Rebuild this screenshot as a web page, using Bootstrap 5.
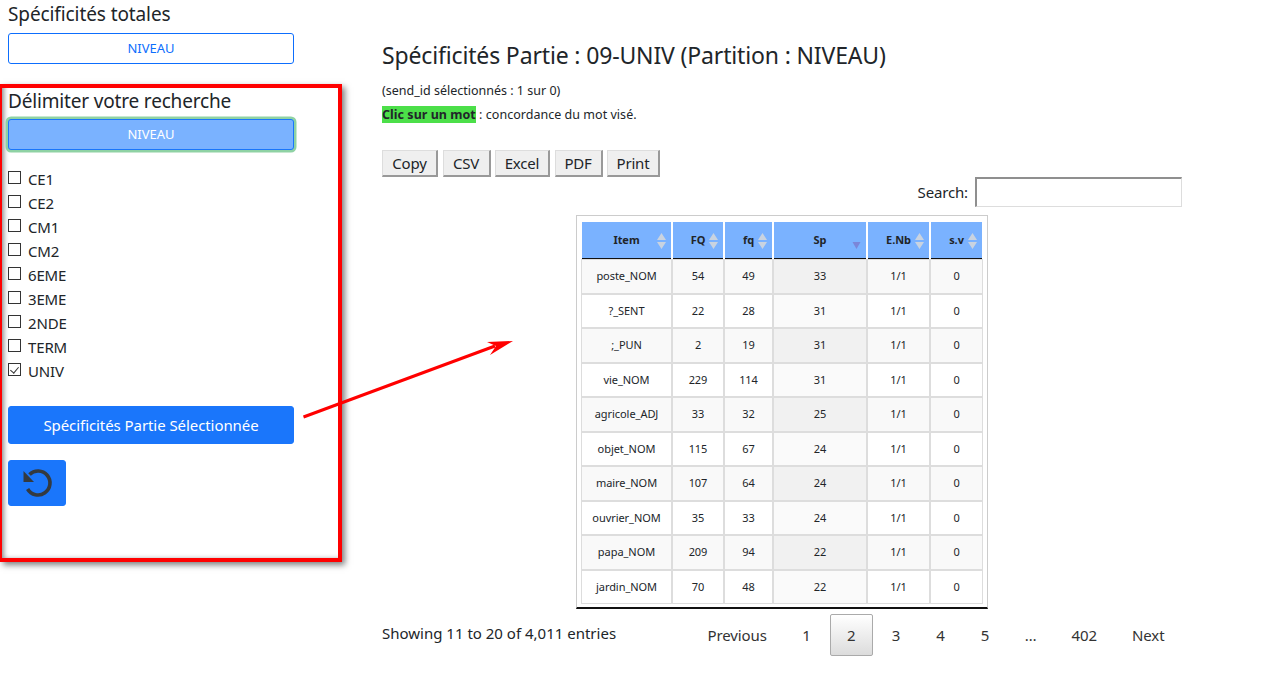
<!DOCTYPE html>
<html lang="fr"><head><meta charset="utf-8"><title>Spécificités</title>
<link href="https://cdn.jsdelivr.net/npm/bootstrap@5.3.0/dist/css/bootstrap.min.css" rel="stylesheet">
<style>
body{font-family:"Noto Sans","Open Sans",sans-serif;color:#212529;background:#fff;overflow:hidden;height:693px;position:relative;font-size:15px}
.page-wrap{width:1288px}
.side-col{width:342px;flex:none}
.side-head{font-size:19px;line-height:28px;margin:0;font-weight:400;letter-spacing:-.1px}
.side-top{padding:0 48px 0 8px;height:84px}
.nv-btn{display:block;width:100%;height:31px;font-size:13px;line-height:17px;padding:0;margin-top:5px;border-radius:3px}
.red-box{height:478px;width:342px;border:4px solid #f00;border-left-width:2px;padding:0 44px 0 6px;box-shadow:3px 3px 6px rgba(0,0,0,.5),inset 5px -2px 5px -3px rgba(0,0,0,.45)}
.red-box .side-head{margin-top:-1px;letter-spacing:-.17px}
.nv-on{background:#7ab2ff;border-color:#1a76fb;color:#fff;box-shadow:0 0 0 2.5px #8fd2a4;margin-top:4px}
.chk-list{margin-top:17px}
.chk-row{height:24px;display:flex;align-items:center;font-size:15px;letter-spacing:-.15px}
.chk-row input{appearance:none;width:13px;height:13px;border:1px solid #333;background:#fff;margin:0 7px 3px 0;flex:none;position:relative}
.chk-row input:checked::after{content:"";position:absolute;left:3px;top:1px;width:5px;height:8px;border:solid #333;border-width:0 1px 1px 0;transform:rotate(40deg)}
.go-btn{display:block;width:100%;height:38px;background:#1a76fb;border-color:#1a76fb;font-size:15px;line-height:36px;padding:0;margin-top:23px;letter-spacing:-.07px;border-radius:3px}
.undo-btn{width:58px;height:46px;background:#1a76fb;border-color:#1a76fb;padding:0;margin-top:16px;display:flex;align-items:center;justify-content:center;border-radius:3px}
.main-col{width:800px;margin-left:40px;flex:none}
.main-title{font-size:23px;line-height:30px;font-weight:400;margin:40px 0 0;letter-spacing:-.15px}
.note-a{font-size:12.5px;line-height:16px;margin:13px 0 0}
.note-b{font-size:12.5px;line-height:16px;margin:8px 0 0;letter-spacing:.03px}
.note-b b{background:#4cdf49;font-weight:700}
.tool-row{gap:4.5px;margin-top:27px}
.dt-btn{height:27px;border:1px solid #ccc;border-width:1px 2px 2px 1px;border-color:#ddd #999 #999 #ddd;background:#efefef;font-size:15px;line-height:24px;padding:0;color:#212529;letter-spacing:-.2px}
.dt-btn:nth-child(1){width:56px}
.dt-btn:nth-child(2){width:48px}
.dt-btn:nth-child(3){width:55px}
.dt-btn:nth-child(4){width:48px}
.dt-btn:nth-child(5){width:53px}
.search-row{height:30px;justify-content:flex-end;align-items:center;gap:7px;font-size:15px;letter-spacing:-.15px}
.search-row input{width:207px;height:30px;border:1px solid #999;border-top-width:2px;border-left-width:2px;border-color:#8f8f8f #ddd #ddd #8f8f8f}
.tbl-box{width:412px;height:394px;margin:8px 0 0 194px;border:1px solid #ccc;border-bottom:2px solid #111;padding:4px 5px}
.tbl-box table{border-collapse:separate;border-spacing:2px;table-layout:fixed;width:404px;margin:0 0 0 -2px;font-size:11px;letter-spacing:-.05px}
.tbl-box th{background:#7ab2ff;height:36px;text-align:center;font-weight:700;position:relative;border-bottom:0;padding:0;box-shadow:0 1px 0 #111}
.tbl-box td{height:32.5px;text-align:center;padding:0;outline:1px solid #ddd;background:#fff}
.tbl-box tbody tr:nth-child(odd) td{background:#f9f9f9}
.tbl-box td.sort-c{background:#fafafa}
.tbl-box tbody tr:nth-child(odd) td.sort-c{background:#f1f1f1}
.sort-ico{position:absolute;right:5px;top:11px;width:9px;height:16px}
.foot-row{margin-top:5px;align-items:center;height:42px;font-size:15px}
.foot-info{padding-bottom:3px}
.pg-wrap{margin-left:auto;gap:0;align-items:center;font-size:15px;letter-spacing:-.1px}
.pg-item{padding:0 17.5px;line-height:42px;height:42px;color:#333;min-width:44.5px;text-align:center}
.pg-on{border:1px solid #aaa;border-radius:2px;background:linear-gradient(#fff,#dcdcdc);line-height:40px;padding:0;min-width:43px;margin:0 1px}
.arrow-svg{position:absolute;left:300px;top:335px}
</style></head><body>
<div class="page-wrap d-flex">
<div class="side-col">
 <div class="side-top"><h5 class="side-head">Spécificités totales</h5><button class="btn btn-outline-primary nv-btn">NIVEAU</button></div>
 <div class="red-box">
  <h5 class="side-head">Délimiter votre recherche</h5>
  <button class="btn nv-btn nv-on">NIVEAU</button>
  <div class="chk-list">
   <label class="chk-row"><input type="checkbox">CE1</label>
   <label class="chk-row"><input type="checkbox">CE2</label>
   <label class="chk-row"><input type="checkbox">CM1</label>
   <label class="chk-row"><input type="checkbox">CM2</label>
   <label class="chk-row"><input type="checkbox">6EME</label>
   <label class="chk-row"><input type="checkbox">3EME</label>
   <label class="chk-row"><input type="checkbox">2NDE</label>
   <label class="chk-row"><input type="checkbox">TERM</label>
   <label class="chk-row"><input type="checkbox" checked>UNIV</label>
  </div>
  <button class="btn btn-primary go-btn">Spécificités Partie Sélectionnée</button>
  <button class="btn btn-primary undo-btn" aria-label="reset"><svg width="32" height="32" viewBox="0 0 32 32"><path d="M8.500 7.500A12 12 0 1 1 6.600 22" fill="none" stroke="#343a40" stroke-width="3.600"/><path d="M2.500 4V15H13z" fill="#343a40"/></svg></button>
 </div>
</div>
<div class="main-col">
 <h3 class="main-title">Spécificités Partie : 09-UNIV (Partition : NIVEAU)</h3>
 <p class="note-a">(send_id sélectionnés : 1 sur 0)</p>
 <p class="note-b"><b>Clic sur un mot</b> : concordance du mot visé.</p>
 <div class="d-flex tool-row"><button class="dt-btn">Copy</button><button class="dt-btn">CSV</button><button class="dt-btn">Excel</button><button class="dt-btn">PDF</button><button class="dt-btn">Print</button></div>
 <div class="d-flex search-row"><label>Search:</label><input type="search"></div>
 <div class="tbl-box">
 <table>
  <colgroup><col style="width:89px"><col style="width:50px"><col style="width:47px"><col style="width:92px"><col style="width:61px"><col style="width:51px"></colgroup>
  <thead><tr>
  <th>Item<svg class="sort-ico" viewBox="0 0 9 16"><path d="M4.500 0 9 7H0zM4.500 16 0 9h9z" fill="#c9d3e0"/></svg></th>
  <th>FQ<svg class="sort-ico" viewBox="0 0 9 16"><path d="M4.500 0 9 7H0zM4.500 16 0 9h9z" fill="#c9d3e0"/></svg></th>
  <th>fq<svg class="sort-ico" viewBox="0 0 9 16"><path d="M4.500 0 9 7H0zM4.500 16 0 9h9z" fill="#c9d3e0"/></svg></th>
  <th>Sp<svg class="sort-ico" viewBox="0 0 9 16"><path d="M.5 9h8L4.500 16z" fill="#7b86d8"/></svg></th>
  <th>E.Nb<svg class="sort-ico" viewBox="0 0 9 16"><path d="M4.500 0 9 7H0zM4.500 16 0 9h9z" fill="#c9d3e0"/></svg></th>
  <th>s.v<svg class="sort-ico" viewBox="0 0 9 16"><path d="M4.500 0 9 7H0zM4.500 16 0 9h9z" fill="#c9d3e0"/></svg></th>
  </tr></thead>
  <tbody>
  <tr><td>poste_NOM</td><td>54</td><td>49</td><td class="sort-c">33</td><td>1/1</td><td>0</td></tr>
  <tr><td>?_SENT</td><td>22</td><td>28</td><td class="sort-c">31</td><td>1/1</td><td>0</td></tr>
  <tr><td>;_PUN</td><td>2</td><td>19</td><td class="sort-c">31</td><td>1/1</td><td>0</td></tr>
  <tr><td>vie_NOM</td><td>229</td><td>114</td><td class="sort-c">31</td><td>1/1</td><td>0</td></tr>
  <tr><td>agricole_ADJ</td><td>33</td><td>32</td><td class="sort-c">25</td><td>1/1</td><td>0</td></tr>
  <tr><td>objet_NOM</td><td>115</td><td>67</td><td class="sort-c">24</td><td>1/1</td><td>0</td></tr>
  <tr><td>maire_NOM</td><td>107</td><td>64</td><td class="sort-c">24</td><td>1/1</td><td>0</td></tr>
  <tr><td>ouvrier_NOM</td><td>35</td><td>33</td><td class="sort-c">24</td><td>1/1</td><td>0</td></tr>
  <tr><td>papa_NOM</td><td>209</td><td>94</td><td class="sort-c">22</td><td>1/1</td><td>0</td></tr>
  <tr><td>jardin_NOM</td><td>70</td><td>48</td><td class="sort-c">22</td><td>1/1</td><td>0</td></tr>
  </tbody>
 </table>
 </div>
 <div class="d-flex foot-row"><div class="foot-info">Showing 11 to 20 of 4,011 entries</div>
 <div class="d-flex pg-wrap"><span class="pg-item">Previous</span><span class="pg-item">1</span><span class="pg-item pg-on">2</span><span class="pg-item">3</span><span class="pg-item">4</span><span class="pg-item">5</span><span class="pg-item">…</span><span class="pg-item">402</span><span class="pg-item">Next</span></div></div>
</div>
</div>
<svg class="arrow-svg" width="220" height="90" viewBox="0 0 220 90"><path d="M3.500 82 195 11" stroke="#f00" stroke-width="3" fill="none"/><path d="M213 6 187 7 196 11 190 20z" fill="#f00"/></svg>
<script src="https://cdn.jsdelivr.net/npm/bootstrap@5.3.0/dist/js/bootstrap.bundle.min.js"></script>
</body></html>
